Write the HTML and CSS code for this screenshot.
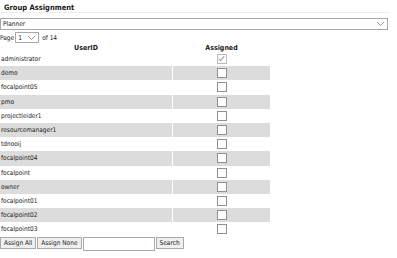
FILE: index.html
```html
<!DOCTYPE html>
<html lang="en">
<head>
    <meta charset="UTF-8">
    <title>Group Assignment</title>
    <link rel="stylesheet" href="styles.css">
</head>
<body>
    <div class="panel">
        <div class="title">Group Assignment</div>
        <div class="group-select">
            <span>Planner</span>
            <svg class="caret" width="9" height="6" viewBox="0 0 9 6"><path d="M1 1 L4.5 4.5 L8 1" fill="none" stroke="#999" stroke-width="1"/></svg>
        </div>
        <div class="pager">
            Page
            <span class="page-select">
                <span>1</span>
                <svg class="caret" width="9" height="6" viewBox="0 0 9 6"><path d="M1 1 L4.5 4.5 L8 1" fill="none" stroke="#999" stroke-width="1"/></svg>
            </span>
            of 14
        </div>
        <table class="users">
            <thead>
                <tr><th class="col-user">UserID</th><th class="col-check">Assigned</th></tr>
            </thead>
            <tbody id="rows"></tbody>
        </table>
        <div class="actions">
            <button>Assign All</button><button>Assign None</button><input type="text"><button>Search</button>
        </div>
    </div>
    <script>
        const users = ['administrator', 'demo', 'focalpoint05', 'pmo', 'projectleider1', 'resourcemanager1',
            'tdnooij', 'focalpoint04', 'focalpoint', 'owner', 'focalpoint01', 'focalpoint02', 'focalpoint03'];
        const rows = document.getElementById('rows');
        users.forEach((name, i) => {
            const tr = document.createElement('tr');
            if (i % 2 === 1) tr.className = 'alt';
            const checked = i === 0 ? ' checked' : '';
            tr.innerHTML = `<td>${name}</td><td class="col-check"><span class="box${checked}"></span></td>`;
            rows.appendChild(tr);
        });
    </script>
</body>
</html>
```
FILE: styles.css
```css
body {
    margin: 0;
    font-family: "DejaVu Sans Condensed", "Liberation Sans", sans-serif;
    font-size: 6.5px;
    color: #1a1a1a;
    background: #fff;
}
.panel {
    width: 390px;
}
.title {
    font-weight: bold;
    font-size: 7.5px;
    height: 9px;
    padding: 3px 4px 0;
    border-bottom: 1px solid #efeee2;
    margin-bottom: 5px;
}
.group-select {
    display: flex;
    align-items: center;
    justify-content: space-between;
    height: 10px;
    width: 382px;
    border: 1px solid #a9a9a9;
    padding: 0 2px;
}
.caret {
    display: block;
}
.pager {
    display: flex;
    align-items: center;
    gap: 1px;
    margin-top: 2px;
    height: 11px;
}
.page-select {
    display: flex;
    align-items: center;
    justify-content: space-between;
    width: 18px;
    height: 9px;
    border: 1px solid #a9a9a9;
    padding: 0 2px;
    margin-right: 2px;
}
.users {
    border-collapse: separate;
    border-spacing: 1px 0;
    margin-left: -1px;
}
.users th {
    font-weight: bold;
    font-size: 7px;
    height: 9px;
    padding: 0;
    text-align: center;
}
.col-user {
    width: 172px;
}
.col-check {
    width: 97px;
    text-align: center;
}
.users td {
    height: 14.2px;
    padding: 0 0 0 1px;
}
.users td.col-check {
    padding: 0;
}
.users tr.alt td {
    background: #dcdcdc;
}
.box {
    display: inline-block;
    width: 8px;
    height: 8px;
    border: 1px solid #8f8f8f;
    background: #fff;
    vertical-align: middle;
    position: relative;
}
.box.checked {
    border-color: #bbb;
}
.box.checked::after {
    content: "";
    position: absolute;
    left: 2px;
    top: 0;
    width: 2px;
    height: 5px;
    border: solid #999;
    border-width: 0 1px 1px 0;
    transform: rotate(40deg);
}
.actions {
    display: flex;
    margin-top: 1px;
}
.actions button,
.actions input {
    font-family: inherit;
    font-size: 6.5px;
    height: 12px;
    margin: 0;
    border: 1px solid #a9a9a9;
    background: #efefef;
    padding: 0 3px;
    color: #1a1a1a;
}
.actions button {
    margin-right: 1px;
}
.actions input {
    width: 70px;
    background: #fff;
    padding: 0;
    margin-right: 1px;
}
```
